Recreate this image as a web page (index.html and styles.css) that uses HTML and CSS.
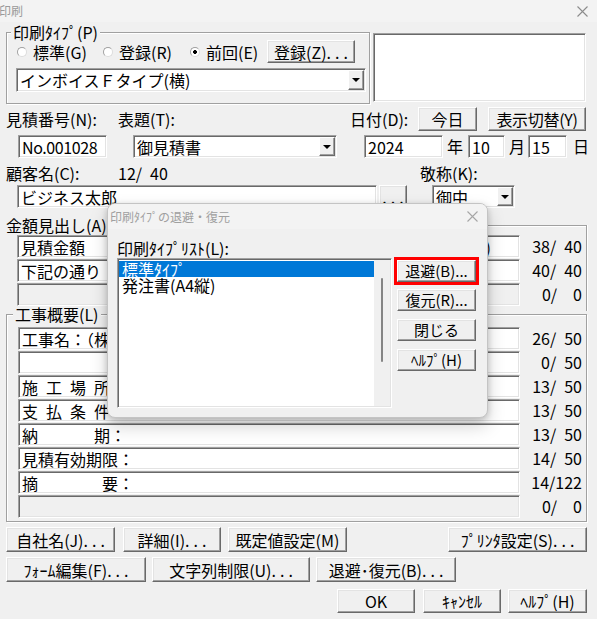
FILE: index.html
```html
<!DOCTYPE html>
<html lang="ja">
<head>
<meta charset="utf-8">
<title>印刷</title>
<link rel="stylesheet" href="styles.css">
</head>
<body>
<div class="win">
  <div class="titlebar">
    <span class="ttl">印刷</span>
    <svg class="xbtn" width="11" height="11" viewBox="0 0 11 11"><path d="M0.5 0.5L10.5 10.5M10.5 0.5L0.5 10.5" stroke="#8c8c8c" stroke-width="1.1"/></svg>
  </div>

  <div class="sec1">
    <div class="group g1">
      <div class="legend">印刷ﾀｲﾌﾟ(P)</div>
      <div class="radios">
        <label class="radio r1"><span class="rb"></span>標準(G)</label>
        <label class="radio r2"><span class="rb"></span>登録(R)</label>
        <label class="radio r3"><span class="rb on"></span>前回(E)</label>
        <button class="btn b-reg">登録(Z)<span class="d">...</span></button>
      </div>
      <div class="field combo c-type"><span class="val">インボイスＦタイプ(横)</span><span class="dd"></span></div>
    </div>
    <div class="field memo"></div>
  </div>

  <div class="row r-hdr">
    <span class="lbl w-no">見積番号(N):</span>
    <span class="lbl w-title">表題(T):</span>
    <span class="lbl w-date">日付(D):</span>
    <button class="btn b-today">今日</button>
    <button class="btn b-toggle">表示切替(Y)</button>
  </div>

  <div class="row r-in">
    <div class="field f-no">No.001028</div>
    <div class="field combo f-title"><span class="val">御見積書</span><span class="dd"></span></div>
    <div class="field f-year">2024</div>
    <span class="unit u-y">年</span>
    <div class="field f-mon">10</div>
    <span class="unit u-m">月</span>
    <div class="field f-day">15</div>
    <span class="unit u-d">日</span>
  </div>

  <div class="row r-clbl">
    <span class="lbl w-cust">顧客名(C):</span>
    <span class="lbl w-cnt">12/&ensp;40</span>
    <span class="lbl">敬称(K):</span>
  </div>

  <div class="row r-cust">
    <div class="field f-cust">ビジネス太郎</div>
    <button class="btn b-more"><span class="d">...</span></button>
    <div class="field combo f-hon"><span class="val">御中</span><span class="dd"></span></div>
  </div>

  <div class="amt">
    <div class="legend lg-amt">金額見出し(A)</div>
    <div class="frow first">
      <div class="field ff-amt"><span class="val">見積金額</span><span class="tail t1">)</span></div>
      <span class="num">38/&ensp;40</span>
    </div>
    <div class="frow">
      <div class="field ff-amt"><span class="val">下記の通り</span><span class="tail t2">す。</span></div>
      <span class="num">40/&ensp;40</span>
    </div>
    <div class="frow">
      <div class="field ff-amt dis"></div>
      <span class="num">0/&ensp;&ensp;0</span>
    </div>
  </div>

  <div class="group kouji">
    <div class="legend lg-k">工事概要(L)</div>
    <div class="krow first">
      <div class="field ff-k">工事名：（株）</div>
      <span class="num">26/&ensp;50</span>
    </div>
    <div class="krow">
      <div class="field ff-k"></div>
      <span class="num">0/&ensp;50</span>
    </div>
    <div class="krow">
      <div class="field ff-k">施&ensp;工&ensp;場&ensp;所：</div>
      <span class="num">13/&ensp;50</span>
    </div>
    <div class="krow">
      <div class="field ff-k">支&ensp;払&ensp;条&ensp;件：</div>
      <span class="num">13/&ensp;50</span>
    </div>
    <div class="krow">
      <div class="field ff-k">納　　　&ensp;期：</div>
      <span class="num">13/&ensp;50</span>
    </div>
    <div class="krow">
      <div class="field ff-k">見積有効期限：</div>
      <span class="num">14/&ensp;50</span>
    </div>
    <div class="krow">
      <div class="field ff-k">摘　　　　要：</div>
      <span class="num">14/122</span>
    </div>
    <div class="krow">
      <div class="field ff-k dis"></div>
      <span class="num">0/&ensp;&ensp;0</span>
    </div>
  </div>

  <div class="brow br1">
    <button class="btn b1a">自社名(J)<span class="d">...</span></button>
    <button class="btn b1b">詳細(I)<span class="d">...</span></button>
    <button class="btn b1c">既定値設定(M)</button>
    <button class="btn b1d">ﾌﾟﾘﾝﾀ設定(S)<span class="d">...</span></button>
  </div>
  <div class="brow br2">
    <button class="btn b2a">ﾌｫｰﾑ編集(F)<span class="d">...</span></button>
    <button class="btn b2b">文字列制限(U)<span class="d">...</span></button>
    <button class="btn b2c">退避･復元(B)<span class="d">...</span></button>
  </div>
  <div class="brow br3">
    <button class="btn b3">OK</button>
    <button class="btn b3 b3b">ｷｬﾝｾﾙ</button>
    <button class="btn b3 b3c">ﾍﾙﾌﾟ(H)</button>
  </div>

  <div class="dlg">
    <div class="dtitle">
      <span class="dttl">印刷ﾀｲﾌﾟの退避・復元</span>
      <svg class="dx" width="11" height="11" viewBox="0 0 11 11"><path d="M0.5 0.5L10.5 10.5M10.5 0.5L0.5 10.5" stroke="#a6a6a6" stroke-width="1.1"/></svg>
    </div>
    <div class="dbody">
      <div class="dleft">
        <div class="dlabel">印刷ﾀｲﾌﾟﾘｽﾄ(L):</div>
        <div class="list">
          <div class="items">
            <div class="item sel">標準ﾀｲﾌﾟ</div>
            <div class="item">発注書(A4縦)</div>
          </div>
          <div class="sb"><div class="thumb"></div></div>
        </div>
      </div>
      <div class="dright">
        <div class="hl"><button class="btn dbtn">退避(B)...</button></div>
        <button class="btn dbtn db2">復元(R)...</button>
        <button class="btn dbtn db3">閉じる</button>
        <button class="btn dbtn db3">ﾍﾙﾌﾟ(H)</button>
      </div>
    </div>
  </div>
</div>
</body>
</html>
```

FILE: styles.css
```css
* { box-sizing: border-box; }
html, body { margin: 0; padding: 0; }
body {
  background: #f0f0f0;
  font-family: "Noto Sans CJK JP", "Noto Sans", sans-serif;
  font-size: 16px;
  line-height: 16px;
  color: #000;
}
.win {
  position: relative;
  width: 597px;
  height: 619px;
  overflow: hidden;
  background: #f0f0f0;
}
.titlebar {
  height: 22px;
  background: #f3f3f3;
  display: flex;
  align-items: center;
  justify-content: space-between;
  padding: 0 9px 0 0;
}
.ttl { font-size: 12px; color: #9a9a9a; margin-left: -1px; line-height: 12px; }

/* common controls */
.field {
  background: #fff;
  border: 1px solid;
  border-color: #a0a0a0 #fff #fff #a0a0a0;
  box-shadow: inset 1px 1px #696969, inset -1px -1px #e3e3e3;
  padding: 0 2px 0 3px;
  height: 23px;
  display: flex;
  align-items: center;
  white-space: nowrap;
  overflow: hidden;
}
.field.dis { background: #f0f0f0; }
.combo { padding-right: 0; }
.dd {
  width: 16px;
  align-self: stretch;
  margin: 1px 1px 1px auto;
  background: #f0f0f0;
  border: 1px solid;
  border-color: #fff #696969 #696969 #fff;
  box-shadow: inset -1px -1px #a0a0a0;
  display: flex;
  align-items: center;
  justify-content: center;
}
.dd::after {
  content: "";
  border-left: 4px solid transparent;
  border-right: 4px solid transparent;
  border-top: 4px solid #000;
}
.btn {
  font: inherit;
  color: #000;
  background: #f0f0f0;
  border: 1px solid;
  border-color: #fff #696969 #696969 #fff;
  box-shadow: inset -1px -1px #a0a0a0, inset 1px 1px #e3e3e3;
  padding: 0;
  margin: 0;
  display: flex;
  align-items: center;
  justify-content: center;
  white-space: nowrap;
  line-height: 16px;
}
.d { letter-spacing: 4px; margin-right: -4px; }
.group {
  border: 1px solid #a0a0a0;
  box-shadow: inset 1px 1px #fff, 1px 1px #fff;
}
.legend {
  width: max-content;
  background: #f0f0f0;
  padding: 0 2px;
  margin: -9px 0 0 4px;
  height: 16px;
  white-space: nowrap;
}
.row { display: flex; }

/* section 1 */
.sec1 { display: flex; align-items: flex-start; padding-left: 6px; }
.g1 { margin-top: 10px; width: 364px; height: 72px; }
.radios { display: flex; align-items: center; height: 23px; margin-top: 0; padding-left: 10px; }
.radio { display: flex; align-items: center; white-space: nowrap; }
.r1 { width: 86px; }
.r2 { width: 87px; }
.r3 { width: 77px; }
.rb {
  width: 10px;
  height: 10px;
  border-radius: 50%;
  border: 1px solid;
  border-color: #a0a0a0 #dcdcdc #dcdcdc #a0a0a0;
  background: #fff;
  margin-right: 6px;
  flex: none;
}
.rb.on { background: radial-gradient(circle, #000 0 1.6px, #fff 2.2px); }
.b-reg { width: 88px; height: 23px; }
.c-type { margin: 5px 0 0 9px; width: 350px; height: 24px; }
.memo { margin: 11px 0 0 3px; width: 213px; height: 69px; }

/* header row */
.r-hdr { margin-top: 3px; height: 24px; padding-left: 6px; align-items: center; }
.lbl { white-space: nowrap; }
.w-no { width: 112px; }
.w-title { width: 232px; }
.w-date { width: 68px; }
.b-today { width: 59px; height: 24px; }
.b-toggle { width: 98px; height: 24px; margin-left: 11px; letter-spacing: -0.3px; }

/* inputs row */
.r-in { margin-top: 4px; height: 23px; padding-left: 18px; }
.unit { line-height: 23px; }
.f-no { width: 89px; letter-spacing: -0.4px; }
.f-title { width: 204px; margin-left: 26px; }
.f-year { width: 79px; margin-left: 27px; }
.u-y { margin-left: 4px; }
.f-mon { width: 37px; margin-left: 5px; }
.u-m { margin-left: 4px; }
.f-day { width: 39px; margin-left: 3px; }
.u-d { margin-left: 6px; }

/* customer */
.r-clbl { margin-top: 5px; height: 20px; padding-left: 6px; align-items: center; }
.w-cust { width: 112px; }
.w-cnt { width: 302px; }
.r-cust { margin-top: 2px; height: 23px; padding-left: 17px; }
.f-cust { width: 360px; }
.b-more { width: 28px; height: 23px; margin-left: 2px; }
.f-hon { width: 83px; margin-left: 25px; }

/* amount heading */
.amt {
  margin: 17px 0 0 4px;
  width: 583px;
  height: 86px;
  border-top: 1px solid #a0a0a0;
  border-right: 1px solid #a0a0a0;
  box-shadow: inset 0 1px #fff, 1px 0 #fff;
}
.lg-amt { margin-left: 0; }
.frow { display: flex; margin-top: 1px; }
.frow.first { margin-top: 2px; }
.ff-amt { width: 503px; margin-left: 13px; }
.tail { flex: none; margin-left: auto; }
.t1 { padding-right: 26px; }
.t2 { padding-right: 20px; }
.num { width: 62px; text-align: right; line-height: 23px; white-space: nowrap; }

/* kouji group */
.kouji { margin: 3px 0 0 6px; width: 581px; height: 208px; }
.lg-k { margin-left: 6px; }
.krow { display: flex; margin-top: 1px; }
.krow.first { margin-top: 5px; }
.ff-k { width: 502px; margin-left: 11px; }

/* bottom buttons */
.brow { display: flex; padding: 0 10px 0 6px; }
.br1 { margin-top: 5px; height: 25px; }
.br2 { margin-top: 5px; height: 25px; }
.br3 { margin-top: 7px; height: 24px; justify-content: flex-end; }
.b1a { width: 109px; }
.b1b { width: 98px; margin-left: 8px; }
.b1c { width: 119px; margin-left: 7px; }
.b1d { width: 139px; margin-left: auto; }
.b2a { width: 140px; }
.b2b { width: 158px; margin-left: 6px; }
.b2c { width: 140px; margin-left: 6px; }
.b3 { width: 78px; }
.b3b { margin-left: 8px; }
.b3c { width: 79px; margin-left: 7px; }

/* dialog */
.dlg {
  position: absolute;
  left: 107px;
  top: 203px;
  width: 381px;
  height: 215px;
  background: #f0f0f0;
  border: 1px solid #c4c4c4;
  border-radius: 8px;
  overflow: hidden;
  box-shadow: 0 2px 6px rgba(0,0,0,0.18), 0 8px 18px rgba(0,0,0,0.18);
}
.dtitle {
  height: 25px;
  background: #f3f3f3;
  display: flex;
  align-items: center;
  justify-content: space-between;
  padding: 0 9px 0 2px;
}
.dttl { font-size: 12px; line-height: 12px; color: #a0a0a0; }
.dbody { display: flex; padding-left: 9px; }
.dlabel { margin-top: 11px; height: 16px; white-space: nowrap; }
.list {
  margin-top: 2px;
  width: 275px;
  height: 150px;
  display: flex;
  border: 1px solid;
  border-color: #a0a0a0 #fff #fff #a0a0a0;
  box-shadow: inset 1px 1px #696969, inset -1px -1px #e3e3e3;
  padding: 1px;
  background: #fff;
}
.items { flex: 1; background: #fff; padding-top: 1px; }
.item { height: 16px; padding-left: 3px; white-space: nowrap; }
.item.sel { background: #0078d7; color: #fff; }
.sb { width: 16px; background: #f0f0f0; }
.thumb { width: 2px; height: 84px; margin: 18px 0 0 7px; background: #858585; border-radius: 1px; }
.dright { margin: 28px 0 0 2px; display: flex; flex-direction: column; }
.hl { border: 3px solid #ff0000; width: 85px; height: 28px; }
.dbtn { width: 79px; height: 22px; font-size: 15px; }
.db2 { margin: 4px 0 0 3px; }
.db3 { margin: 8px 0 0 3px; }
```
